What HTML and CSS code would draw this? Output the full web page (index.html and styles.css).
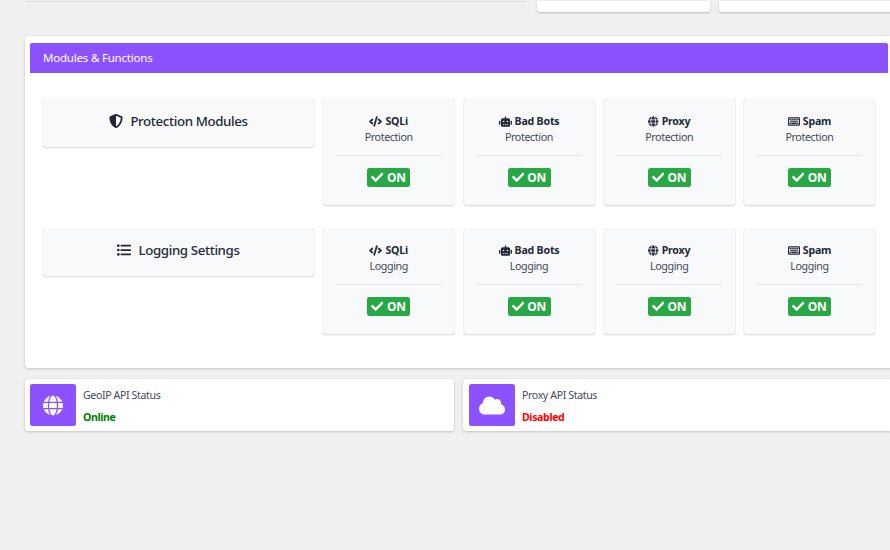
FILE: index.html
```
<!DOCTYPE html>
<html lang="en">
<head>
<meta charset="utf-8">
<title>Modules &amp; Functions</title>
<link rel="stylesheet" href="styles.css">
</head>
<body>
<svg class="defs" aria-hidden="true">
<symbol id="check" viewBox="0 0 512 512"><path d="M173.898 439.404l-166.4-166.4c-9.997-9.997-9.997-26.206 0-36.204l36.203-36.204c9.997-9.998 26.207-9.998 36.204 0L192 312.69 432.095 72.596c9.997-9.997 26.207-9.997 36.204 0l36.203 36.204c9.997 9.997 9.997 26.206 0 36.204l-294.4 294.401c-9.998 9.997-26.207 9.997-36.204-.001z"/></symbol>
<symbol id="globe" viewBox="0 0 496 512"><path d="M336.5 160C322 70.7 287.8 8 248 8s-74 62.7-88.5 152h177zM152 256c0 22.2 1.2 43.5 3.3 64h185.3c2.1-20.5 3.3-41.8 3.3-64s-1.2-43.5-3.3-64H155.3c-2.1 20.5-3.3 41.8-3.3 64zm324.7-96c-28.6-67.9-86.5-120.4-158-141.6 24.4 33.8 41.2 84.7 50 141.6h108zM177.2 18.4C105.8 39.6 47.8 92.1 19.3 160h108c8.7-56.9 25.5-107.8 49.9-141.6zM487.4 192H372.7c2.1 21 3.3 42.5 3.3 64s-1.2 43-3.3 64h114.6c5.5-20.5 8.6-41.8 8.6-64s-3.1-43.5-8.5-64zM120 256c0-21.5 1.2-43 3.3-64H8.6C3.2 212.5 0 233.8 0 256s3.2 43.5 8.6 64h114.6c-2-21-3.2-42.5-3.2-64zm39.5 96c14.5 89.3 48.7 152 88.5 152s74-62.7 88.5-152h-177zm159.3 141.6c71.4-21.2 129.4-73.7 158-141.6h-108c-8.8 56.9-25.6 107.8-50 141.6zM19.3 352c28.6 67.9 86.5 120.4 158 141.6-24.4-33.8-41.2-84.7-50-141.6h-108z"/></symbol>
<symbol id="cloud" viewBox="0 0 640 512"><path d="M537.6 226.6c4.1-10.7 6.4-22.4 6.4-34.6 0-53-43-96-96-96-19.7 0-38.1 6-53.3 16.2C367 64.2 315.3 32 256 32c-88.4 0-160 71.6-160 160 0 2.7.1 5.4.2 8.1C40.2 219.8 0 273.2 0 336c0 79.5 64.5 144 144 144h368c70.7 0 128-57.3 128-128 0-61.9-44-113.6-102.4-125.4z"/></symbol>
<symbol id="code" viewBox="0 0 640 512"><path d="M278.9 511.5l-61-17.7c-6.4-1.8-10-8.5-8.2-14.9L346.2 8.7c1.8-6.4 8.5-10 14.9-8.2l61 17.7c6.4 1.8 10 8.5 8.2 14.9L293.8 503.3c-1.9 6.4-8.5 10.1-14.9 8.2zm-114-112.2l43.5-46.4c4.6-4.9 4.3-12.7-.8-17.2L117 256l90.6-79.7c5.1-4.5 5.5-12.3.8-17.2l-43.5-46.4c-4.5-4.8-12.1-5.1-17-.5L3.8 247.2c-5.1 4.7-5.1 12.8 0 17.5l144.1 135.1c4.9 4.6 12.5 4.4 17-.5zm327.2.6l144.1-135.1c5.1-4.7 5.1-12.8 0-17.5L492.1 112.1c-4.8-4.5-12.4-4.3-17 .5L431.6 159c-4.6 4.9-4.3 12.7.8 17.2L523 256l-90.6 79.7c-5.1 4.5-5.5 12.3-.8 17.2l43.5 46.4c4.5 4.9 12.1 5.1 17 .6z"/></symbol>
<symbol id="robot" viewBox="0 0 640 512"><path d="M32,224H64V416H32A32,32,0,0,1,0,384V256A32,32,0,0,1,32,224Zm512-48V448a64,64,0,0,1-64,64H160a64,64,0,0,1-64-64V176a80,80,0,0,1,80-80H288V32a32,32,0,0,1,64,0V96H464A80,80,0,0,1,544,176ZM264,256a40,40,0,1,0-40,40A40,40,0,0,0,264,256Zm-8,128H192v32h64Zm96,0H288v32h64ZM456,256a40,40,0,1,0-40,40A40,40,0,0,0,456,256Zm-8,128H384v32h64ZM640,256V384a32,32,0,0,1-32,32H576V224h32A32,32,0,0,1,640,256Z"/></symbol>
<symbol id="shield" viewBox="0 0 512 512"><path d="M466.5 83.7l-192-80a48.15 48.15 0 0 0-36.9 0l-192 80C27.7 91.1 16 108.6 16 128c0 198.5 114.5 335.7 221.5 380.3 11.8 4.9 25.1 4.9 36.9 0C360.1 472.6 496 349.3 496 128c0-19.4-11.7-36.9-29.5-44.3zM256.1 446.3l-.1-381 175.9 73.3c-3.3 151.4-82.1 261.1-175.8 307.7z"/></symbol>
<symbol id="list" viewBox="0 0 512 512"><circle cx="48" cy="96" r="48"/><circle cx="48" cy="256" r="48"/><circle cx="48" cy="416" r="48"/><rect x="128" y="64" width="384" height="64" rx="16"/><rect x="128" y="224" width="384" height="64" rx="16"/><rect x="128" y="384" width="384" height="64" rx="16"/></symbol>
<symbol id="keyboard" viewBox="0 0 576 512"><path fill-rule="evenodd" d="M48 54h480a48 48 0 0 1 48 48v308a48 48 0 0 1-48 48H48a48 48 0 0 1-48-48V102a48 48 0 0 1 48-48zm2 62v280h476V116z"/><path d="M72 138h68v62H72zM164 138h68v62h-68zM254 138h68v62h-68zM344 138h68v62h-68zM438 138h68v62h-68zM116 222h72v62h-72zM208 222h72v62h-72zM298 222h72v62h-72zM388 222h72v62h-72zM72 308h68v62H72zM162 308h252v62H162zM438 308h68v62h-68z"/></symbol>
</svg>
<div class="page">
  <div class="top"><div class="top-line"></div><div class="top-card small"></div><div class="top-card"></div></div>
  <section class="panel">
    <h1 class="panel-head"><span>Modules &amp; Functions</span></h1>
    <div class="rows">
      <div class="row">
        <h2 class="group"><svg><use href="#shield"/></svg><span>Protection Modules</span></h2>
        <div class="card"><div class="name"><svg class="wide"><use href="#code"/></svg><b>SQLi</b></div><div class="kind">Protection</div><hr><div class="badge"><svg><use href="#check"/></svg>ON</div></div>
        <div class="card"><div class="name"><svg class="wide"><use href="#robot"/></svg><b>Bad Bots</b></div><div class="kind">Protection</div><hr><div class="badge"><svg><use href="#check"/></svg>ON</div></div>
        <div class="card"><div class="name"><svg><use href="#globe"/></svg><b>Proxy</b></div><div class="kind">Protection</div><hr><div class="badge"><svg><use href="#check"/></svg>ON</div></div>
        <div class="card"><div class="name"><svg class="keys"><use href="#keyboard"/></svg><b>Spam</b></div><div class="kind">Protection</div><hr><div class="badge"><svg><use href="#check"/></svg>ON</div></div>
      </div>
      <div class="row">
        <h2 class="group"><svg><use href="#list"/></svg><span>Logging Settings</span></h2>
        <div class="card"><div class="name"><svg class="wide"><use href="#code"/></svg><b>SQLi</b></div><div class="kind">Logging</div><hr><div class="badge"><svg><use href="#check"/></svg>ON</div></div>
        <div class="card"><div class="name"><svg class="wide"><use href="#robot"/></svg><b>Bad Bots</b></div><div class="kind">Logging</div><hr><div class="badge"><svg><use href="#check"/></svg>ON</div></div>
        <div class="card"><div class="name"><svg><use href="#globe"/></svg><b>Proxy</b></div><div class="kind">Logging</div><hr><div class="badge"><svg><use href="#check"/></svg>ON</div></div>
        <div class="card"><div class="name"><svg class="keys"><use href="#keyboard"/></svg><b>Spam</b></div><div class="kind">Logging</div><hr><div class="badge"><svg><use href="#check"/></svg>ON</div></div>
      </div>
    </div>
  </section>
  <div class="statuses">
    <div class="status"><div class="tile"><svg class="i-globe"><use href="#globe"/></svg></div><div class="info"><div class="label">GeoIP API Status</div><div class="value online">Online</div></div></div>
    <div class="status"><div class="tile"><svg class="i-cloud"><use href="#cloud"/></svg></div><div class="info"><div class="label">Proxy API Status</div><div class="value disabled">Disabled</div></div></div>
  </div>
</div>
</body>
</html>
```

FILE: styles.css
```
* { box-sizing: border-box; }
html { overflow: hidden; }
body { margin: 0; height: 550px; overflow: hidden; background: #f0f0f0; color: #212937; font-family: "Noto Sans", "Open Sans", sans-serif; font-size: 11px; }
svg { display: block; flex: none; fill: currentColor; }
.defs { position: absolute; width: 0; height: 0; }
.page { width: 893px; padding: 1px 0 0 25px; }
.top { display: flex; width: 878px; height: 11px; margin-bottom: 24px; }
.top-line { width: 501px; height: 1px; margin-right: 10.5px; background: #dcdcdc; }
.top-card { flex: 1; background: #fff; border-radius: 0 0 3px 3px; box-shadow: 0 1px 2px rgba(0,0,0,.22); }
.top-card.small { flex: none; width: 173.5px; margin-right: 9px; }
.panel { height: 332px; padding: 7px 5px; background: #fff; border-radius: 3px; box-shadow: 0 0 1px rgba(0,0,0,.13), 0 1px 3px rgba(0,0,0,.17); }
.panel-head { display: flex; align-items: center; height: 30px; margin: 0; padding: 0 0 1px 13px; border-radius: 2px 2px 0 0; background: #8c52ff; color: #fff; font-size: 11.5px; font-weight: 400; letter-spacing: -.2px; }
.rows { display: flex; flex-direction: column; gap: 24px; padding: 26px 13px 0; }
.row { display: grid; grid-template-columns: 271px repeat(4, 131px); column-gap: 9.25px; align-items: start; }
.group, .card { margin: 0; background: #f8f9fb; border-radius: 2px; box-shadow: 0 0 1px rgba(0,0,0,.25), 0 1px 2px rgba(0,0,0,.14); }
.group { display: flex; justify-content: center; height: 48px; padding-top: 12px; line-height: 20px; font-size: 13.3px; font-weight: 500; letter-spacing: -.38px; }
.group svg { width: 14px; height: 14px; margin: 3px 7px 0 0; }
.card { display: flex; flex-direction: column; align-items: center; height: 106px; padding: 14px 13px 0; }
.row + .row .card { height: 105px; padding-top: 13px; }
.row + .row .group { height: 47px; padding-top: 11px; }
.name { display: flex; align-items: center; gap: 3px; height: 16px; line-height: 16px; font-size: 10.6px; letter-spacing: -.2px; }
.name svg { width: 10.5px; height: 11px; }
.name svg.wide { width: 13px; }
.name svg.keys { width: 12px; }
.kind { height: 16px; line-height: 16px; font-size: 10.7px; color: #414958; letter-spacing: -.38px; }
hr { width: 105px; height: 1px; margin: 10px 0 12px; border: 0; background: #e4e5e8; }
.badge { display: flex; align-items: center; justify-content: center; gap: 3px; width: 43px; height: 19px; border-radius: 2.5px; background: #28a745; color: #fff; font-size: 12px; font-weight: 700; line-height: 19px; }
.badge svg { width: 12.5px; height: 12.5px; }
.statuses { display: flex; gap: 9px; width: 868px; margin-top: 11px; }
.status { display: flex; flex: none; width: 429px; height: 52px; padding: 5px; background: #fff; border-radius: 3px; box-shadow: 0 0 1px rgba(0,0,0,.13), 0 1px 3px rgba(0,0,0,.17); }
.status + .status { padding-left: 6px; }
.tile { display: flex; align-items: center; justify-content: center; width: 46px; height: 42px; margin-right: 7px; border-radius: 2.5px; background: #8c52ff; color: #fff; }
.i-globe { width: 20px; height: 21px; }
.i-cloud { width: 26px; height: 21px; }
.label, .value { height: 22px; line-height: 22px; font-size: 10.6px; letter-spacing: -.38px; }
.label { color: #414958; }
.value { font-weight: 700; }
.online { color: #008000; }
.disabled { color: #f00; }
```
